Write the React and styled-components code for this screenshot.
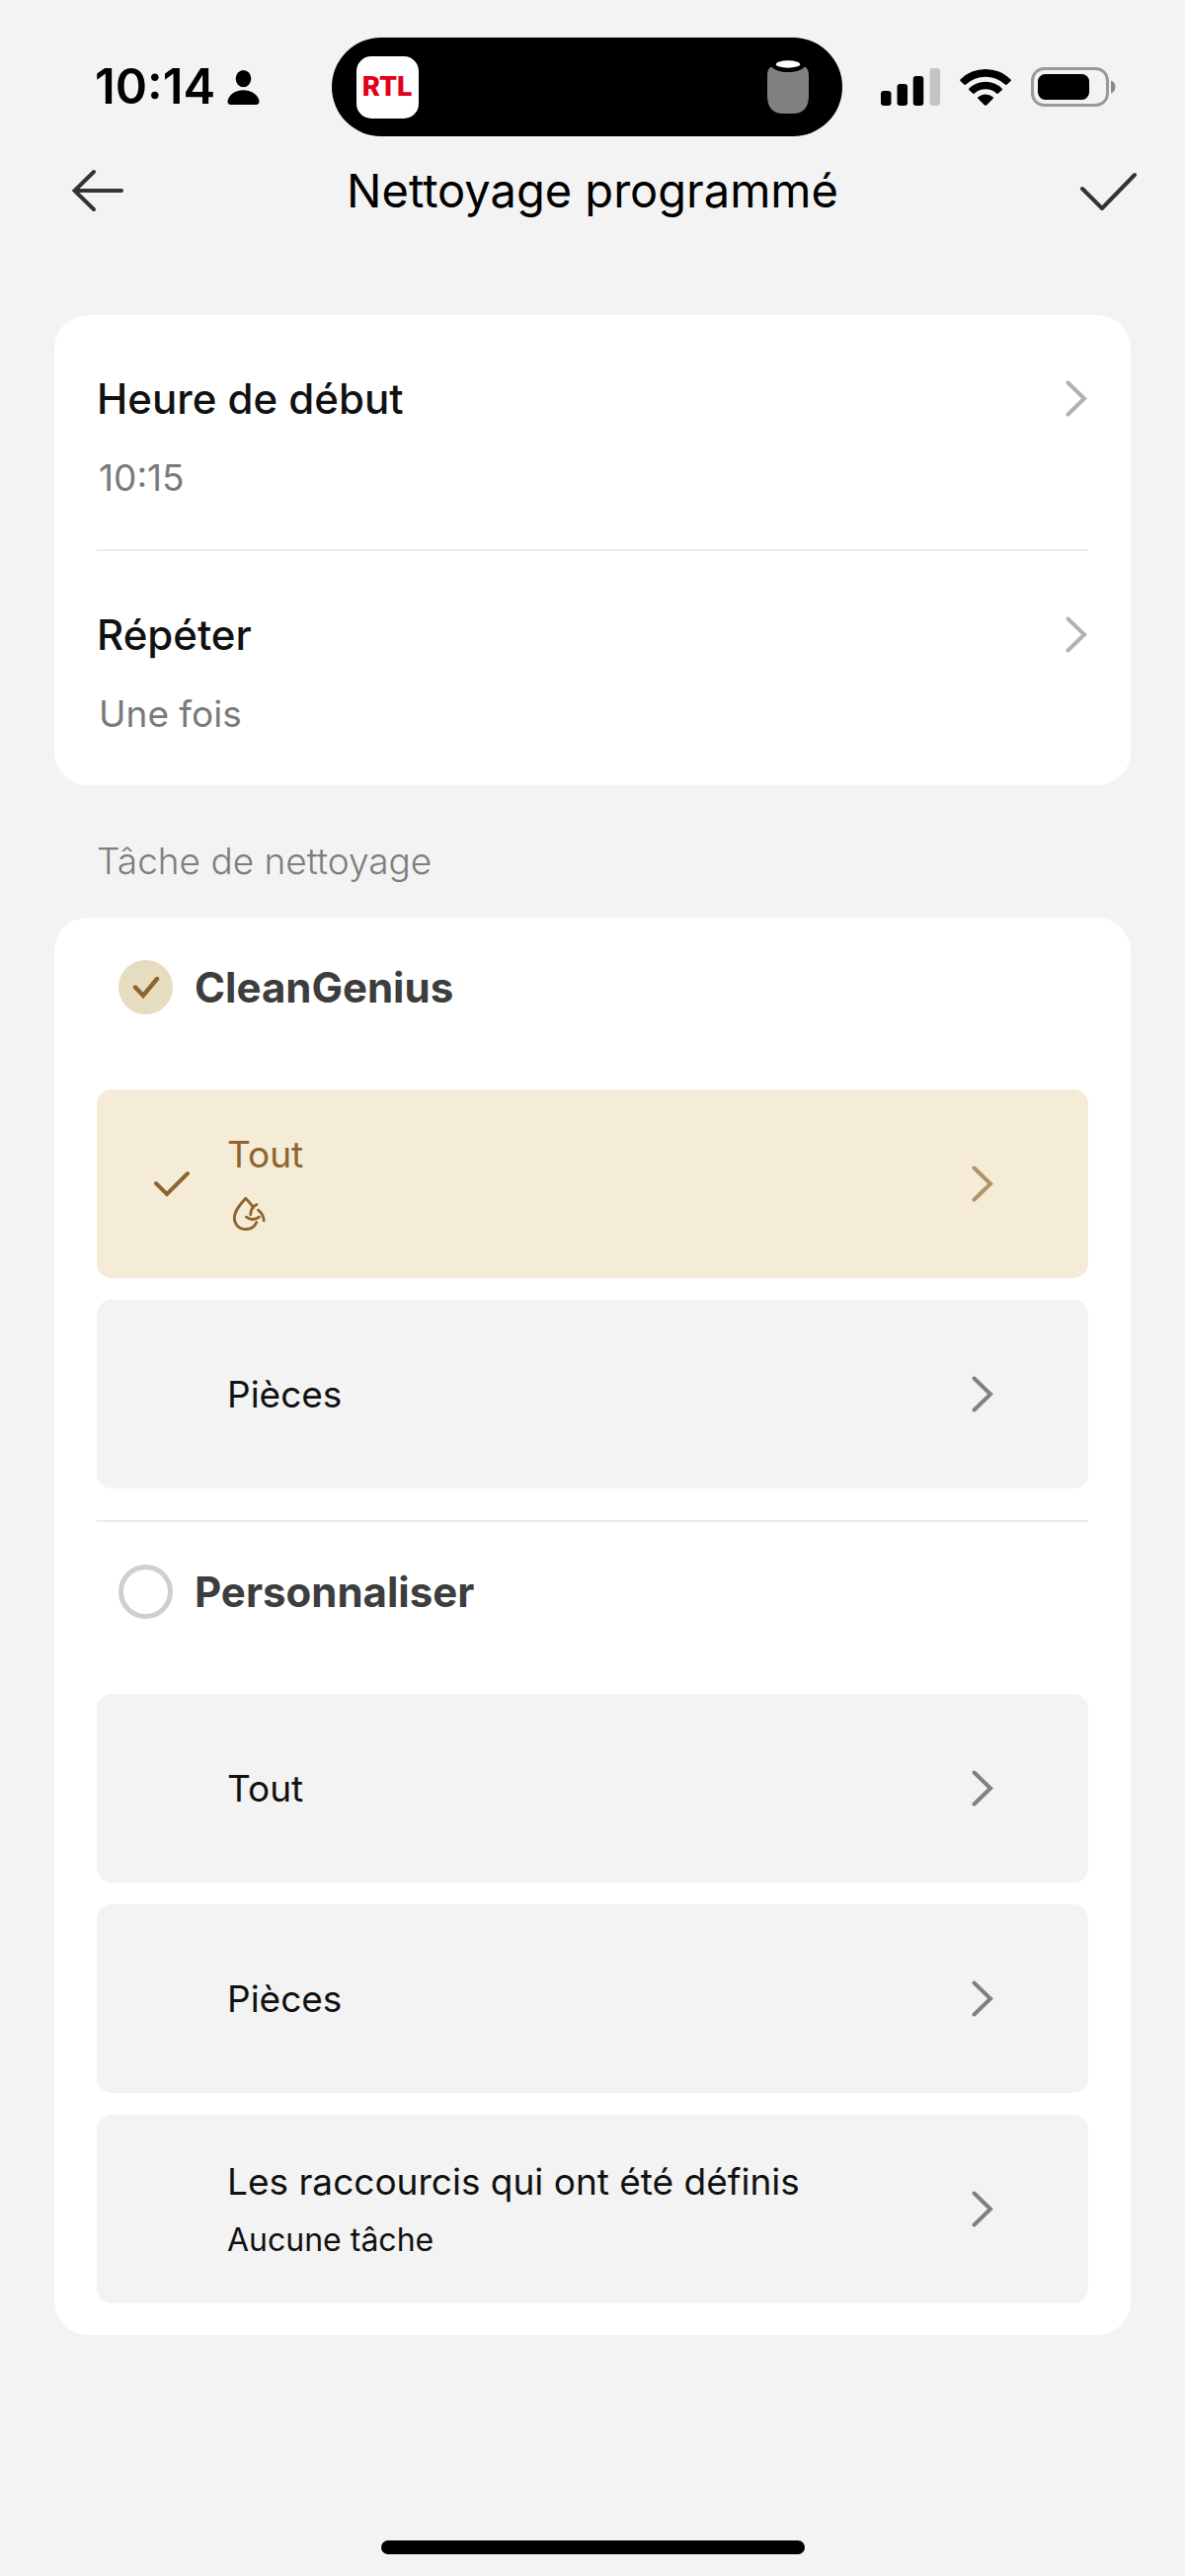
import React, { useState } from 'react'
import styled, { createGlobalStyle } from 'styled-components'

const GlobalStyle = createGlobalStyle`
    * {
        box-sizing: border-box;
    }
    body {
        margin: 0;
        background: #f3f3f3;
        font-family: Inter, "Liberation Sans", sans-serif;
    }
    button {
        border: 0;
        padding: 0;
        background: none;
        color: inherit;
        font: inherit;
        text-align: left;
        cursor: pointer;
    }
    svg {
        display: block;
        flex: none;
    }
`

const Page = styled.div`
    display: flex;
    flex-direction: column;
    min-height: 100vh;
    padding-top: 38px;
`
const StatusBar = styled.div`
    display: grid;
    grid-template-columns: 1fr 517px 1fr;
    align-items: center;
    padding-right: 12px;
`
const Clock = styled.div`
    display: flex;
    align-items: center;
    gap: 12px;
    padding-left: 96px;
    font-size: 49px;
    font-weight: 600;
    line-height: 60px;
`
const Island = styled.div`
    display: flex;
    align-items: center;
    justify-content: space-between;
    height: 100px;
    padding: 0 34px 0 25px;
    border-radius: 50px;
    background: #000;
`
const RadioApp = styled.div`
    display: flex;
    align-items: center;
    justify-content: center;
    width: 63px;
    height: 63px;
    border-radius: 15px;
    background: #fff;
    color: #e2001a;
    font-family: Roboto, "Liberation Sans", sans-serif;
    font-size: 28px;
    font-weight: 900;
    line-height: 36px;
`
const Signals = styled.div`
    display: flex;
    align-items: center;
    gap: 20px;
    padding-left: 39px;
`
const NavBar = styled.header`
    display: grid;
    grid-template-columns: 1fr auto 1fr;
    align-items: center;
    height: 110px;
    padding: 0 48px;
`
const NavButton = styled.button`
    justify-self: ${(props) => (props.$end ? 'end' : 'start')};
    padding-left: ${(props) => (props.$end ? '0' : '24px')};
`
const PageTitle = styled.h1`
    margin: 0;
    font-size: 47px;
    font-weight: 400;
    line-height: 58px;
`
const Main = styled.main`
    padding: 71px 55px 0;
`
const Card = styled.section`
    padding: 0 43px;
    border-radius: 34px;
    background: #fff;
`
const Divider = styled.hr`
    height: 2px;
    margin: 0;
    border: 0;
    background: #ebebeb;
`
const Setting = styled.button`
    display: grid;
    grid-template-columns: 1fr auto;
    align-items: center;
    row-gap: 32px;
    width: 100%;
    padding: 60px 1px 49px 0;
`
const SettingName = styled.span`
    color: #111;
    font-size: 42px;
    font-weight: 500;
    line-height: 50px;
`
const SettingValue = styled.span`
    padding-left: 2px;
    color: #7a7a7a;
    font-size: 37px;
    line-height: 46px;
`
const GroupLabel = styled.h2`
    margin: 0;
    padding: 54px 43px 34px;
    color: #7d7d7d;
    font-size: 37px;
    font-weight: 300;
    line-height: 46px;
`
const Mode = styled.label`
    display: flex;
    align-items: center;
    gap: 22px;
    padding: 43px 22px 76px;
    color: #3d3d3d;
    font-size: 42px;
    font-weight: 700;
    line-height: 55px;
    cursor: pointer;
`
const RadioBox = styled.span`
    display: grid;
    place-items: center;
    width: 55px;
    height: 55px;
    > * {
        grid-area: 1 / 1;
    }
    svg {
        pointer-events: none;
    }
`
const Radio = styled.input`
    appearance: none;
    width: 55px;
    height: 55px;
    margin: 0;
    border: 5px solid #cfcfcf;
    border-radius: 50%;
    cursor: pointer;
    &:checked {
        border-color: #e6dcbf;
        background: #e6dcbf;
    }
`
const Options = styled.div`
    display: flex;
    flex-direction: column;
    gap: 22px;
    padding-bottom: 32px;
`
const Option = styled.button`
    display: grid;
    grid-template-columns: 38px 1fr auto;
    align-items: center;
    column-gap: 37px;
    height: 191px;
    padding: 0 96px 0 57px;
    border-radius: 15px;
    background: ${(props) => (props.$active ? '#f4ecd6' : '#f3f3f3')};
    color: ${(props) => (props.$active ? '#8f642e' : '#111')};
`
const OptionText = styled.span`
    display: flex;
    flex-direction: column;
    gap: 16px;
    font-size: 37px;
    line-height: 46px;
`
const OptionNote = styled.span`
    font-size: 32px;
    line-height: 40px;
`
const HomeBar = styled.div`
    width: 429px;
    height: 14px;
    margin: auto auto 22px;
    border-radius: 7px;
    background: #000;
`

const Person = () => (
    <svg width="33" height="35" viewBox="0 0 33 35">
        <ellipse cx="16.5" cy="8.6" rx="7.8" ry="8.6" />
        <path d="M4 35C1.500 35 .5 33.800 .5 31.800C1 26 7.500 20.300 16.500 20.300S32 26 32.500 31.800C32.500 33.800 31.500 35 29 35Z" />
    </svg>
)

const Speaker = () => (
    <svg width="42" height="54" viewBox="0 0 42 54">
        <path d="M4 6.500C7 10 13 12 21 12S35 10 38 6.500C41 8.500 42 11 42 16V36C42 48 36 54 26 54H16C6 54 0 48 0 36V16C0 11 1 8.500 4 6.500Z" fill="#808080" />
        <ellipse cx="21" cy="4" rx="12.300" ry="3.700" fill="#fff" />
    </svg>
)

const Cellular = () => (
    <svg width="60" height="38" viewBox="0 0 60 38">
        <rect x="0" y="23" width="10.500" height="15" rx="3" />
        <rect x="16.500" y="16" width="10.500" height="22" rx="3" />
        <rect x="32.700" y="8" width="10.500" height="30" rx="3" />
        <rect x="49.500" y="0" width="10.500" height="38" rx="3" fill="#c4c4c4" />
    </svg>
)

const Wifi = () => (
    <svg width="52" height="38" viewBox="0 0 52 38">
        <path d="M.7 11.300A36 36 0 0 1 51.300 11.300Q52.300 12.300 51.300 13.300L47.800 16.600Q46.800 17.400 45.800 16.500A29 29 0 0 0 6.200 16.500Q5.200 17.400 4.200 16.600L.7 13.300Q-.3 12.300 .7 11.300Z" />
        <path d="M9.400 20.500A24 24 0 0 1 42.600 20.500Q43.500 21.500 42.600 22.300L39 25.500Q38 26.400 37 25.500A16.500 16.500 0 0 0 15 25.500Q14 26.400 13 25.500L9.400 22.300Q8.500 21.500 9.400 20.500Z" />
        <path d="M18.500 29.200A12 12 0 0 1 33.500 29.200Q34.500 30 33.500 31L27 37.400Q26 38.300 25 37.400L18.500 31Q17.500 30 18.500 29.200Z" />
    </svg>
)

const Battery = () => (
    <svg width="86" height="40" viewBox="0 0 86 40">
        <rect x="1.500" y="1.500" width="76" height="37" rx="12" fill="none" stroke="#999" strokeWidth="3" />
        <rect x="7" y="7" width="52" height="26" rx="7.500" />
        <path d="M81 13.500C84 14.500 85.500 17 85.500 20S84 25.500 81 26.500Z" fill="#8a8a8a" />
    </svg>
)

const Tick = () => (
    <svg width="38" height="27" viewBox="0 0 38 27" fill="none" stroke="currentColor" strokeWidth="4" strokeLinecap="round">
        <path d="M3 13L14 24L35 3" />
    </svg>
)

const RadioTick = () => (
    <svg width="28" height="24" viewBox="0 0 28 24" fill="none" stroke="#8f642e" strokeWidth="4.400" strokeLinecap="round">
        <path d="M3 11.500L11 20L25 3" />
    </svg>
)

const Chevron = ({ color }) => (
    <svg width="22" height="38" viewBox="0 0 22 38" fill="none" stroke={color} strokeWidth="4" strokeLinecap="round">
        <path d="M2.500 2.500L19 18.500L2.500 34.500" />
    </svg>
)

const DropSpin = () => (
    <svg width="40" height="43" viewBox="0 0 40 43" fill="none" stroke="currentColor" strokeWidth="2.800" strokeLinecap="round" strokeLinejoin="round">
        <path d="M29.800 29.500C28 34 24 36.500 19 36.500C12 36.500 7.300 31.500 7.300 25C7.300 18 13 11.500 18.800 5.200C22 8.500 25 12 26.500 14.700" />
        <path d="M29.800 11.500C26 13.500 23.700 17 23.800 21.800" />
        <path d="M19.500 24.200C23.500 27.100 28.500 27.100 32.500 24.200" />
        <path d="M31.500 17.200C34.800 19.700 37 23 37.200 27.800" />
    </svg>
)

const settings = [
    { name: 'Heure de début', value: '10:15' },
    { name: 'Répéter', value: 'Une fois' },
]

const modes = [
    {
        name: 'CleanGenius',
        options: [
            { id: 'genius-all', title: 'Tout', icon: <DropSpin /> },
            { id: 'genius-rooms', title: 'Pièces' },
        ],
    },
    {
        name: 'Personnaliser',
        options: [
            { id: 'custom-all', title: 'Tout' },
            { id: 'custom-rooms', title: 'Pièces' },
            { id: 'custom-shortcuts', title: 'Les raccourcis qui ont été définis', note: 'Aucune tâche' },
        ],
    },
]

export default function App() {
    const [mode, setMode] = useState('CleanGenius')
    const [option, setOption] = useState('genius-all')

    return (
        <Page>
            <GlobalStyle />
            <StatusBar>
                <Clock>
                    10:14
                    <Person />
                </Clock>
                <Island>
                    <RadioApp>RTL</RadioApp>
                    <Speaker />
                </Island>
                <Signals>
                    <Cellular />
                    <Wifi />
                    <Battery />
                </Signals>
            </StatusBar>
            <NavBar>
                <NavButton aria-label="Retour">
                    <svg width="54" height="44" viewBox="0 0 54 44" fill="none" stroke="#333" strokeWidth="4" strokeLinecap="round">
                        <path d="M51 22H3.500M23 3L3.500 22L23 41" />
                    </svg>
                </NavButton>
                <PageTitle>Nettoyage programmé</PageTitle>
                <NavButton $end aria-label="Valider">
                    <svg width="59" height="40" viewBox="0 0 59 40" fill="none" stroke="#333" strokeWidth="4" strokeLinecap="round">
                        <path d="M3 18L23 38L56 4" />
                    </svg>
                </NavButton>
            </NavBar>
            <Main>
                <Card>
                    {settings.map(({ name, value }, i) => (
                        <React.Fragment key={name}>
                            {i > 0 && <Divider />}
                            <Setting>
                                <SettingName>{name}</SettingName>
                                <Chevron color="#b1b1b1" />
                                <SettingValue>{value}</SettingValue>
                            </Setting>
                        </React.Fragment>
                    ))}
                </Card>
                <GroupLabel>Tâche de nettoyage</GroupLabel>
                <Card>
                    {modes.map(({ name, options }, i) => (
                        <React.Fragment key={name}>
                            {i > 0 && <Divider />}
                            <Mode>
                                <RadioBox>
                                    <Radio type="radio" name="mode" checked={mode === name} onChange={() => setMode(name)} />
                                    {mode === name && <RadioTick />}
                                </RadioBox>
                                {name}
                            </Mode>
                            <Options>
                                {options.map(({ id, title, icon, note }) => (
                                    <Option key={id} $active={option === id} onClick={() => setOption(id)}>
                                        <span>{option === id && <Tick />}</span>
                                        <OptionText>
                                            {title}
                                            {icon}
                                            {note && <OptionNote>{note}</OptionNote>}
                                        </OptionText>
                                        <Chevron color={option === id ? '#b59262' : '#808080'} />
                                    </Option>
                                ))}
                            </Options>
                        </React.Fragment>
                    ))}
                </Card>
            </Main>
            <HomeBar />
        </Page>
    )
}
